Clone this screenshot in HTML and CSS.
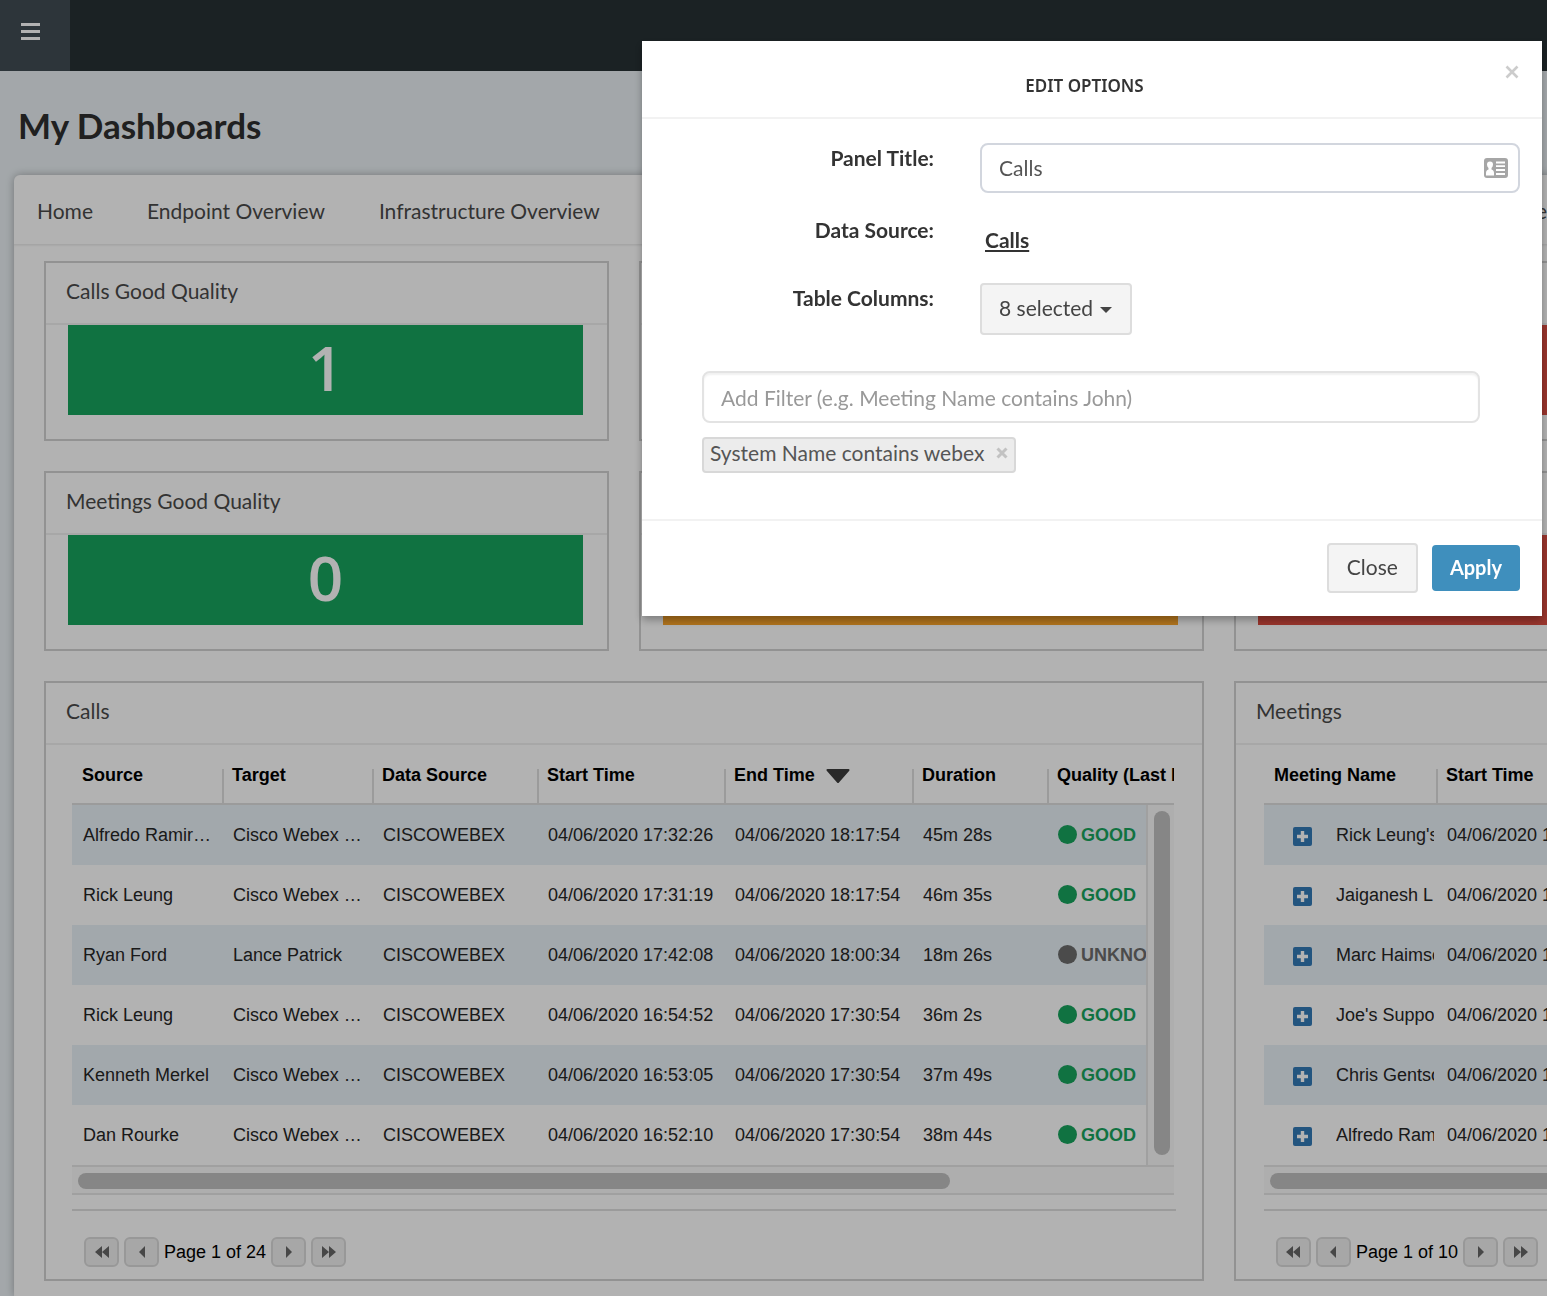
FILE: index.html
```html
<!DOCTYPE html>
<html lang="en">
<head>
<meta charset="utf-8">
<title>My Dashboards</title>
<link rel="stylesheet" href="styles.css">
</head>
<body>
<svg class="sprite" aria-hidden="true">
  <symbol id="prev" viewBox="0 0 6 12"><path d="M6 0v12L0 6z"/></symbol>
  <symbol id="next" viewBox="0 0 6 12"><path d="M0 0v12l6-6z"/></symbol>
  <symbol id="first" viewBox="0 0 14 12"><path d="M7 0v12L0 6zM14 0v12L7 6z"/></symbol>
  <symbol id="last" viewBox="0 0 14 12"><path d="M0 0v12l7-6zM7 0v12l7-6z"/></symbol>
  <symbol id="plus" viewBox="0 0 19 19"><rect width="19" height="19" rx="2" fill="#337ab7"/><path d="M9.500 4v11M4 9.500h11" stroke="#fff" stroke-width="3.400"/></symbol>
</svg>

<div class="app">
  <header class="topbar">
    <button class="menu" aria-label="Menu">
      <svg width="19" height="17" viewBox="0 0 19 17"><path d="M0 1.500h19M0 8.500h19M0 15.500h19" stroke="#fff" stroke-width="3"/></svg>
    </button>
  </header>

  <main class="page">
    <h1>My Dashboards</h1>
    <section class="card">
      <nav class="tabs">
        <a href="#">Home</a>
        <a href="#">Endpoint Overview</a>
        <a href="#">Infrastructure Overview</a>
        <a href="#" class="tab-end">e</a>
      </nav>
      <div class="panels">
        <article class="panel">
          <h2>Calls Good Quality</h2>
          <div class="stat good">1</div>
        </article>
        <article class="panel"><h2></h2><div class="stat fair"></div></article>
        <article class="panel"><h2></h2><div class="stat poor"></div></article>
        <article class="panel">
          <h2>Meetings Good Quality</h2>
          <div class="stat good">0</div>
        </article>
        <article class="panel"><h2></h2><div class="stat fair"></div></article>
        <article class="panel"><h2></h2><div class="stat poor"></div></article>

        <article class="panel wide">
          <h2>Calls</h2>
          <div class="data">
            <div class="grid">
              <table>
                <colgroup><col class="w150"><col class="w150"><col class="w165"><col class="w187"><col class="w188"><col class="w135"><col></colgroup>
                <thead>
                  <tr><th>Source</th><th>Target</th><th>Data Source</th><th>Start Time</th><th>End Time <svg class="sort" width="24" height="14" viewBox="0 0 24 14"><path d="M1.500 1h21L12 13z" fill="#3c3c3c" stroke="#3c3c3c" stroke-width="2" stroke-linejoin="round"/></svg></th><th>Duration</th><th>Quality (Last I</th></tr>
                </thead>
                <tbody>
                  <tr><td>Alfredo Ramir…</td><td>Cisco Webex …</td><td>CISCOWEBEX</td><td>04/06/2020 17:32:26</td><td>04/06/2020 18:17:54</td><td>45m 28s</td><td class="q">GOOD</td></tr>
                  <tr><td>Rick Leung</td><td>Cisco Webex …</td><td>CISCOWEBEX</td><td>04/06/2020 17:31:19</td><td>04/06/2020 18:17:54</td><td>46m 35s</td><td class="q">GOOD</td></tr>
                  <tr><td>Ryan Ford</td><td>Lance Patrick</td><td>CISCOWEBEX</td><td>04/06/2020 17:42:08</td><td>04/06/2020 18:00:34</td><td>18m 26s</td><td class="q unknown">UNKNOWN</td></tr>
                  <tr><td>Rick Leung</td><td>Cisco Webex …</td><td>CISCOWEBEX</td><td>04/06/2020 16:54:52</td><td>04/06/2020 17:30:54</td><td>36m 2s</td><td class="q">GOOD</td></tr>
                  <tr><td>Kenneth Merkel</td><td>Cisco Webex …</td><td>CISCOWEBEX</td><td>04/06/2020 16:53:05</td><td>04/06/2020 17:30:54</td><td>37m 49s</td><td class="q">GOOD</td></tr>
                  <tr><td>Dan Rourke</td><td>Cisco Webex …</td><td>CISCOWEBEX</td><td>04/06/2020 16:52:10</td><td>04/06/2020 17:30:54</td><td>38m 44s</td><td class="q">GOOD</td></tr>
                </tbody>
              </table>
              <div class="vscroll"><i></i></div>
              <div class="hscroll"><i></i></div>
            </div>
            <div class="pager">
              <button aria-label="First page"><svg width="14" height="12"><use href="#first"/></svg></button>
              <button aria-label="Previous page"><svg width="6" height="12"><use href="#prev"/></svg></button>
              <span>Page 1 of 24</span>
              <button aria-label="Next page"><svg width="6" height="12"><use href="#next"/></svg></button>
              <button aria-label="Last page"><svg width="14" height="12"><use href="#last"/></svg></button>
            </div>
          </div>
        </article>

        <article class="panel">
          <h2>Meetings</h2>
          <div class="data meetings">
            <div class="grid">
              <table>
                <colgroup><col class="w172"><col></colgroup>
                <thead><tr><th>Meeting Name</th><th>Start Time</th></tr></thead>
                <tbody>
                  <tr><td><div class="name"><button aria-label="Expand"><svg width="19" height="19"><use href="#plus"/></svg></button><span>Rick Leung's</span></div></td><td>04/06/2020 1</td></tr>
                  <tr><td><div class="name"><button aria-label="Expand"><svg width="19" height="19"><use href="#plus"/></svg></button><span>Jaiganesh L</span></div></td><td>04/06/2020 1</td></tr>
                  <tr><td><div class="name"><button aria-label="Expand"><svg width="19" height="19"><use href="#plus"/></svg></button><span>Marc Haimso</span></div></td><td>04/06/2020 1</td></tr>
                  <tr><td><div class="name"><button aria-label="Expand"><svg width="19" height="19"><use href="#plus"/></svg></button><span>Joe's Suppo</span></div></td><td>04/06/2020 1</td></tr>
                  <tr><td><div class="name"><button aria-label="Expand"><svg width="19" height="19"><use href="#plus"/></svg></button><span>Chris Gentso</span></div></td><td>04/06/2020 1</td></tr>
                  <tr><td><div class="name"><button aria-label="Expand"><svg width="19" height="19"><use href="#plus"/></svg></button><span>Alfredo Ram</span></div></td><td>04/06/2020 1</td></tr>
                </tbody>
              </table>
              <div class="hscroll"><i></i></div>
            </div>
            <div class="pager">
              <button aria-label="First page"><svg width="14" height="12"><use href="#first"/></svg></button>
              <button aria-label="Previous page"><svg width="6" height="12"><use href="#prev"/></svg></button>
              <span>Page 1 of 10</span>
              <button aria-label="Next page"><svg width="6" height="12"><use href="#next"/></svg></button>
              <button aria-label="Last page"><svg width="14" height="12"><use href="#last"/></svg></button>
            </div>
          </div>
        </article>
      </div>
    </section>
  </main>
</div>

<div class="backdrop">
  <form class="modal" role="dialog" aria-labelledby="dialog-title">
    <header class="modal-head">
      <h3 id="dialog-title">EDIT OPTIONS</h3>
      <button type="button" class="dismiss" aria-label="Dismiss"><svg width="14" height="14" viewBox="0 0 14 14"><path d="M1.500 1.500l11 11M12.500 1.500l-11 11" stroke="#ccc" stroke-width="2.600"/></svg></button>
    </header>
    <div class="modal-body">
      <div class="row">
        <label for="panel-title">Panel Title:</label>
        <div class="field">
          <input id="panel-title" class="text" type="text" value="Calls">
          <svg class="contact" width="24" height="20" viewBox="0 0 24 20">
            <rect width="24" height="20" rx="3" fill="#a6a6a6"/>
            <path d="M2 17.500v-2.500q0-3 2.500-3.500V10Q3 8.500 3 6.500 3 3.500 6 3.500T9 6.500Q9 8.500 7.500 10v1.500q2.500.5 2.500 3.500v2.500z" fill="#fff"/>
            <path d="M12 4.500h9M12 8.200h9M12 12h9M12 16h9" stroke="#fff" stroke-width="1.800"/>
          </svg>
        </div>
      </div>
      <div class="row">
        <span class="label">Data Source:</span>
        <a class="source" href="#">Calls</a>
      </div>
      <div class="row">
        <label for="columns">Table Columns:</label>
        <div class="picker">
          <select id="columns"><option>8 selected</option></select>
          <svg class="caret" width="12" height="6" viewBox="0 0 12 6"><path d="M0 0h12L6 6z" fill="#444"/></svg>
        </div>
      </div>
      <div class="filters">
        <input class="text filter" type="text" aria-label="Filter" placeholder="Add Filter (e.g. Meeting Name contains John)">
        <span class="tag">System Name contains webex
          <button type="button" aria-label="Remove filter"><svg width="12" height="12" viewBox="0 0 12 12"><path d="M1.500 1.500l9 9M10.500 1.500l-9 9" stroke="#c2c2c2" stroke-width="3"/></svg></button>
        </span>
      </div>
    </div>
    <footer class="modal-foot">
      <button type="button" class="btn">Close</button>
      <button type="button" class="btn primary">Apply</button>
    </footer>
  </form>
</div>
</body>
</html>
```
FILE: styles.css
```css
* { box-sizing: border-box; }

body {
  margin: 0;
  font-family: Lato, "Open Sans", sans-serif;
  font-size: 21px;
  line-height: 30px;
  color: #4a4a4a;
}

h1, h2, h3 { margin: 0; }
a { color: inherit; text-decoration: none; }
button, input, select { margin: 0; font: inherit; color: inherit; }
button { display: flex; align-items: center; justify-content: center; padding: 0; border: 0; background: none; }
svg { display: block; flex: none; }
.sprite { position: absolute; width: 0; height: 0; }

/* Page */
.app {
  display: flex;
  flex-direction: column;
  min-height: 100vh;
  overflow: hidden;
  background: #eaf0f4;
}

.topbar { display: flex; height: 71px; background: #273134; }
.menu { width: 70px; padding: 0 10px 8px 0; background: #414c54; }

/* The dashboard is wider than the window and runs off its right edge. */
.page {
  display: flex;
  flex: 1;
  flex-direction: column;
  width: 119%;
  padding: 0 14px;
}

.page h1 {
  padding: 34px 4px 30px;
  font-size: 35px;
  line-height: 40px;
  color: #2e2e2e;
}

.card {
  flex: 1;
  background: #fff;
  border-radius: 6px 6px 0 0;
  box-shadow: 0 0 8px rgba(0, 0, 0, .3);
}

.tabs {
  display: flex;
  gap: 54px;
  width: calc(100vw - 14px);
  padding: 21px 0 18px 23px;
}
.tab-end { margin-left: auto; }

.panels {
  display: grid;
  grid-template-columns: repeat(3, 1fr);
  gap: 30px;
  padding: 16px 28px 15px 30px;
  border-top: 1px solid #ececec;
  box-shadow: inset 0 1px 2px rgba(0, 0, 0, .06);
}

.panel { min-width: 0; border: 2px solid #d1d1d1; }
.wide { grid-column: span 2; }

.panel h2 {
  height: 62px;
  padding: 13px 20px;
  border-bottom: 2px solid #f0f0f0;
  font-size: 21px;
  font-weight: 400;
  line-height: 30px;
}

.stat {
  height: 90px;
  margin: 0 24px 24px 22px;
  font: 600 62px/84px "Open Sans", sans-serif;
  text-align: center;
  color: #fff;
}
.good { background: #18a45d; }
.fair { background: #fba429; }
.poor { background: #da4b3f; }

/* Data tables */
.data {
  padding: 0 26px;
  font-family: "Liberation Sans", Arial, sans-serif;
  font-size: 18px;
  line-height: 20px;
}
.meetings { padding-left: 28px; }

.grid { position: relative; margin-right: 2px; overflow: hidden; }

table { width: 100%; table-layout: fixed; border-collapse: separate; border-spacing: 0; }
.w150 { width: 150px; }
.w165 { width: 165px; }
.w187 { width: 187px; }
.w188 { width: 188px; }
.w135 { width: 135px; }
.w172 { width: 172px; }

th {
  height: 60px;
  padding: 20px 0 0 10px;
  border-bottom: 2px solid #dedede;
  overflow: hidden;
  color: #000;
  text-align: left;
  vertical-align: top;
  white-space: nowrap;
}
th + th { background: linear-gradient(#dedede, #dedede) left bottom / 2px 34px no-repeat; }
.sort { display: inline-block; margin-left: 6px; vertical-align: -2px; }

td {
  height: 60px;
  padding: 0 0 0 11px;
  overflow: hidden;
  color: #262626;
  white-space: nowrap;
}
tbody tr:nth-child(odd) { background: #e9f1f7; }

.q { font-weight: 700; color: #18a45d; }
.q::before {
  content: "";
  display: inline-block;
  width: 19px;
  height: 19px;
  margin-right: 4px;
  border-radius: 50%;
  background: currentColor;
  vertical-align: -3px;
}
.q.unknown { color: #6c6c6c; }

.name { display: flex; align-items: center; padding: 0 2px 0 18px; }
.name button { flex: none; padding-top: 3px; }
.name span { flex: 1; margin-left: 24px; overflow: hidden; }

.vscroll {
  position: absolute;
  top: 60px;
  right: 0;
  bottom: 30px;
  width: 28px;
  padding: 6px 4px 10px 6px;
  border-left: 2px solid #e6e6e6;
  background: #fafafa;
}
.hscroll {
  height: 30px;
  padding: 6px;
  border: solid #e6e6e6;
  border-width: 2px 0;
  background: #fafafa;
}
.vscroll i, .hscroll i { display: block; border-radius: 8px; background: #c0c0c0; }
.vscroll i { height: 100%; }
.hscroll i { width: 80%; height: 16px; }

.pager {
  display: flex;
  align-items: center;
  gap: 5px;
  margin-top: 14px;
  padding: 26px 12px 12px;
  border-top: 2px solid #dedede;
  color: #000;
}
.pager button {
  width: 35px;
  height: 30px;
  border: 2px solid #dadada;
  border-radius: 6px;
  background: #f0f0f0;
}
.pager svg { fill: #666; }

/* Dialog */
.backdrop {
  position: fixed;
  inset: 0;
  display: flex;
  align-items: flex-start;
  justify-content: flex-end;
  padding: 41px 5px;
  background: rgba(0, 0, 0, .3);
}

.modal {
  width: 900px;
  max-width: 100%;
  background: #fff;
  box-shadow: 0 4px 8px rgba(0, 0, 0, .3);
}

.modal-head {
  display: flex;
  align-items: flex-start;
  justify-content: space-between;
  height: 78px;
  padding: 24px 23px 0 0;
  border-bottom: 2px solid #f2f2f2;
}
.modal-head h3 {
  flex: 1;
  padding-top: 6px;
  padding-left: 22px;
  font: 600 17px/30px "Noto Sans", sans-serif;
  color: #333;
  text-align: center;
}

.modal-body { padding: 24px 22px 46px; border-bottom: 2px solid #f2f2f2; }

.row { display: grid; grid-template-columns: 270px 1fr; gap: 46px; margin-bottom: 22px; }
.row label, .label { font-weight: 700; color: #333; text-align: right; }

.field { position: relative; }
.text {
  display: block;
  width: 100%;
  height: 50px;
  padding: 0 17px 2px;
  border: 2px solid #d2d6de;
  border-radius: 8px;
  background: #fff;
  color: #555;
}
.contact { position: absolute; top: 15px; right: 12px; }

.source {
  justify-self: start;
  padding: 10px 5px 6px;
  font-weight: 700;
  color: #333;
  text-decoration: underline;
}

.picker { position: relative; justify-self: start; }
.picker select {
  display: block;
  width: 152px;
  height: 52px;
  padding: 0 17px 3px;
  border: 2px solid #ddd;
  border-radius: 4px;
  appearance: none;
  background: #f4f4f4;
  color: #444;
}
.caret { position: absolute; top: 24px; right: 20px; }

.filters {
  display: flex;
  flex-direction: column;
  align-items: flex-start;
  gap: 14px;
  padding: 14px 40px 0 38px;
}
.filter {
  height: 52px;
  padding-bottom: 0;
  border-color: #e3e3e3;
  box-shadow: inset 0 2px 2px rgba(0, 0, 0, .06);
}
.filter::placeholder { color: #999; }

.tag {
  display: flex;
  gap: 12px;
  height: 36px;
  padding: 0 6px 4px;
  border: 2px solid #d8d8d8;
  border-radius: 4px;
  background: #ececec;
  color: #555;
  line-height: 28px;
}

.modal-foot {
  display: flex;
  align-items: center;
  justify-content: flex-end;
  gap: 14px;
  padding: 22px 22px 23px;
}
.btn {
  height: 50px;
  padding: 0 18px 2px;
  border: 2px solid #ddd;
  border-radius: 4px;
  background: #f4f4f4;
  color: #444;
}
.primary {
  height: 46px;
  padding: 0 16px 2px;
  border-color: #3f8fbd;
  background: #3f8fbd;
  color: #fff;
  font-size: 20px;
  font-weight: 700;
}
```
